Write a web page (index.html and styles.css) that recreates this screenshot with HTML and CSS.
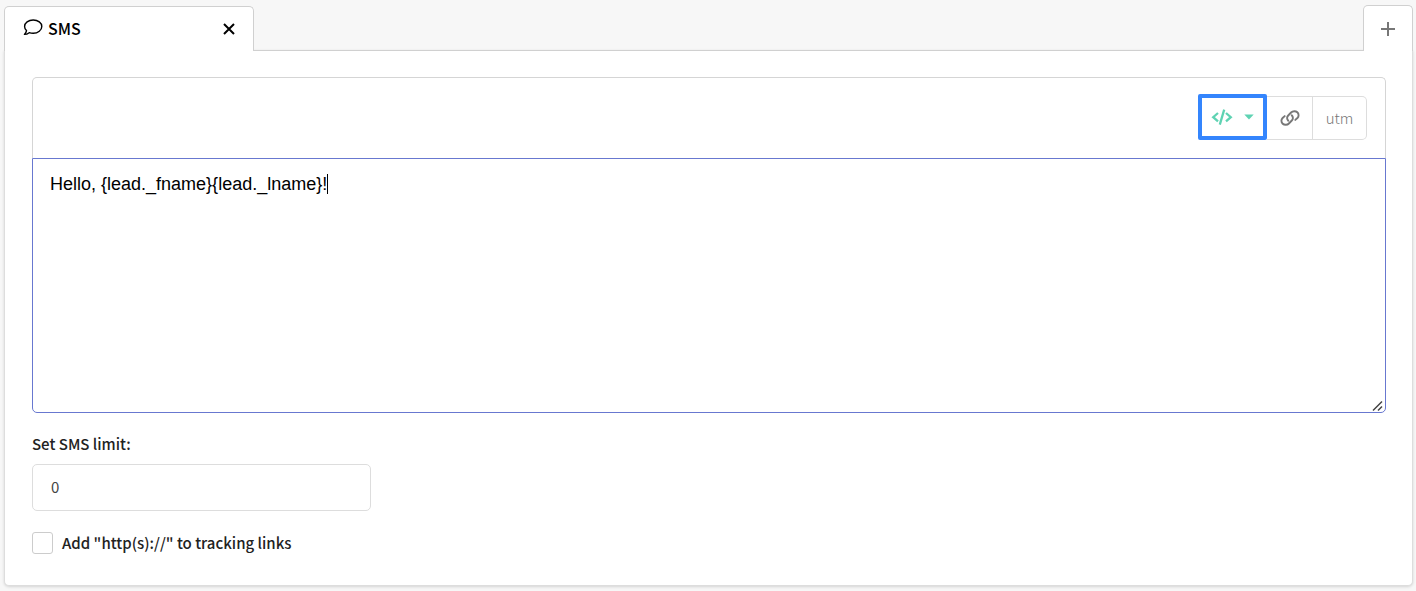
FILE: index.html
```html
<!DOCTYPE html>
<html lang="en">
<head>
    <meta charset="UTF-8">
    <meta name="viewport" content="width=device-width, initial-scale=1.0">
    <title>SMS</title>
    <link rel="stylesheet" href="styles.css">
</head>
<body>
    <nav class="tabs">
        <div class="tab">
            <a href="#sms" class="tab-link">
                <svg width="20" height="18" viewBox="0 0 20 18" fill="none" stroke="currentColor" stroke-width="1.4" stroke-linejoin="round">
                    <path d="M10.2 1C5.4 1 1.6 3.900 1.6 7.500c0 1.6.7 3 1.9 4.1-.2 1.5-1 2.8-2.1 3.8 1.9 0 3.5-.7 4.8-1.7 1.2.4 2.600.6 4 .6 4.800 0 8.600-3.100 8.600-6.800S15 1 10.200 1z"/>
                </svg>
                SMS
            </a>
            <button type="button" class="tab-close" aria-label="Close">
                <svg width="12" height="12" viewBox="0 0 12 12" stroke="currentColor" stroke-width="2"><path d="M1 1l10 10M11 1L1 11"/></svg>
            </button>
        </div>
        <button type="button" class="tab-add" aria-label="Add">
            <svg width="14" height="14" viewBox="0 0 14 14" stroke="currentColor" stroke-width="2"><path d="M7 0v14M0 7h14"/></svg>
        </button>
    </nav>
    <main class="panel" id="sms">
        <div class="editor">
            <div class="toolbar">
                <button type="button" class="tool tool-active" aria-label="Variables">
                    <svg width="22" height="16" viewBox="0 0 22 16" fill="none" stroke="currentColor" stroke-width="2.300"><path d="M7 4L2.200 8.200 7 12.400M15 4l4.800 4.200L15 12.400M13.200.600L8.800 15.600"/></svg>
                    <svg width="10" height="6" viewBox="0 0 10 6" fill="currentColor"><path d="M.300.500h9.400L5 5.500z"/></svg>
                </button>
                <button type="button" class="tool tool-link" aria-label="Link">
                    <svg width="20" height="16" viewBox="0 0 20 16" fill="none" stroke="currentColor" stroke-width="1.900" stroke-linecap="round">
                        <path d="M8.300 10.700C6.700 9.200 6.700 7 8.200 5.500l2.900-3c1.600-1.600 4.600-1.700 6.200-.200 1.700 1.600 1.700 4.100.100 5.700l-2.100 1.900"/>
                        <path d="M11.700 5.300c1.600 1.500 1.600 3.700.100 5.200l-2.900 3c-1.600 1.600-4.600 1.700-6.200.200-1.700-1.600-1.700-4.100-.100-5.700l2.100-1.900"/>
                    </svg>
                </button>
                <button type="button" class="tool tool-utm">utm</button>
            </div>
            <div class="message">
                <textarea class="message-text" aria-label="Message" spellcheck="false">Hello, {lead._fname}{lead._lname}!</textarea>
                <span class="caret"></span>
                <svg class="grip" width="12" height="12" viewBox="0 0 12 12" stroke="#444" stroke-width="1.500"><path d="M1 10.500l9-9M6 10.500l4-4"/></svg>
            </div>
        </div>
        <label class="label" for="limit">Set SMS limit:</label>
        <input class="limit" id="limit" type="text" value="0">
        <label class="check">
            <input class="check-box" type="checkbox">
            Add "http(s)://" to tracking links
        </label>
    </main>
</body>
</html>
```

FILE: styles.css
```css
* {
    box-sizing: border-box;
}
body {
    margin: 0;
    padding: 5px 3px 5px 4px;
    background-color: #f7f7f7;
    color: #222;
    font-family: "Noto Sans CJK JP", "Noto Sans", sans-serif;
    font-size: 15px;
    line-height: 18px;
}
button {
    padding: 0;
    border: 0;
    background: none;
    color: inherit;
    font: inherit;
    cursor: pointer;
}
svg {
    display: block;
}

/* Tabs */
.tabs {
    display: flex;
    justify-content: space-between;
    align-items: flex-end;
}
.tab, .tab-add {
    position: relative;
    z-index: 1;
    margin-bottom: -1px;
    border: 1px solid #d0d0d0;
    border-bottom: 0;
    border-radius: 5px 5px 0 0;
    background-color: #fff;
}
.tab {
    display: flex;
    justify-content: space-between;
    align-items: center;
    width: 250px;
    height: 45px;
    padding: 0 18px;
    color: #000;
}
.tab-link {
    display: flex;
    align-items: center;
    gap: 5px;
    padding-bottom: 2px;
    color: inherit;
    font-size: 16px;
    font-weight: 500;
    text-decoration: none;
}
.tab-add {
    display: flex;
    justify-content: center;
    align-items: center;
    width: 50px;
    height: 46px;
    color: #777;
}

/* Panel */
.panel {
    padding: 26px 26px 31px 27px;
    border: 1px solid #ddd;
    border-top-color: #d0d0d0;
    border-radius: 0 0 5px 5px;
    background-color: #fff;
    box-shadow: 0 1px 3px rgba(0, 0, 0, .14);
}
.toolbar {
    display: flex;
    justify-content: flex-end;
    height: 81px;
    padding: 18px;
    border: 1px solid #d5d5d5;
    border-bottom: 0;
    border-radius: 5px 5px 0 0;
}
.tool {
    display: flex;
    justify-content: center;
    align-items: center;
    height: 44px;
    border: 1px solid #ddd;
    border-left: 0;
    background-color: #fff;
    color: #777;
}
.tool-active {
    gap: 11px;
    width: 69px;
    height: 46px;
    margin-top: -2px;
    border: 4px solid #3485fd;
    border-radius: 2px;
    color: #5fd3b3;
}
.tool-link {
    width: 46px;
}
.tool-utm {
    width: 54px;
    border-radius: 0 5px 5px 0;
    font-weight: 300;
}

/* Message */
.message {
    position: relative;
}
.message-text {
    display: block;
    width: 100%;
    height: 255px;
    padding: 14px 17px;
    border: 1px solid #6878d0;
    border-radius: 0 0 5px 5px;
    outline: 0;
    background-color: #fff;
    color: #000;
    font-family: "Liberation Sans", Arial, sans-serif;
    font-size: 18px;
    line-height: 22px;
    resize: vertical;
}
.message-text::-webkit-resizer {
    background-color: transparent;
}
.caret {
    position: absolute;
    top: 16px;
    left: 295px;
    width: 1px;
    height: 20px;
    background-color: #000;
}
.grip {
    position: absolute;
    right: 2px;
    bottom: 1px;
    pointer-events: none;
}

/* Fields */
.label {
    display: block;
    margin: 22px 0 11px;
    font-weight: 500;
}
.limit {
    display: block;
    width: 25%;
    height: 47px;
    padding: 0 18px 2px;
    border: 1px solid #ddd;
    border-radius: 5px;
    color: #444;
    font: inherit;
}
.check {
    display: flex;
    align-items: center;
    gap: 9px;
    margin-top: 21px;
    font-weight: 500;
}
.check-box {
    width: 21px;
    height: 22px;
    margin: 0;
    border: 1px solid #ccc;
    border-radius: 3px;
    background-color: #fff;
    appearance: none;
}
.check-box:checked {
    background-color: #5fd3b3;
}
```
